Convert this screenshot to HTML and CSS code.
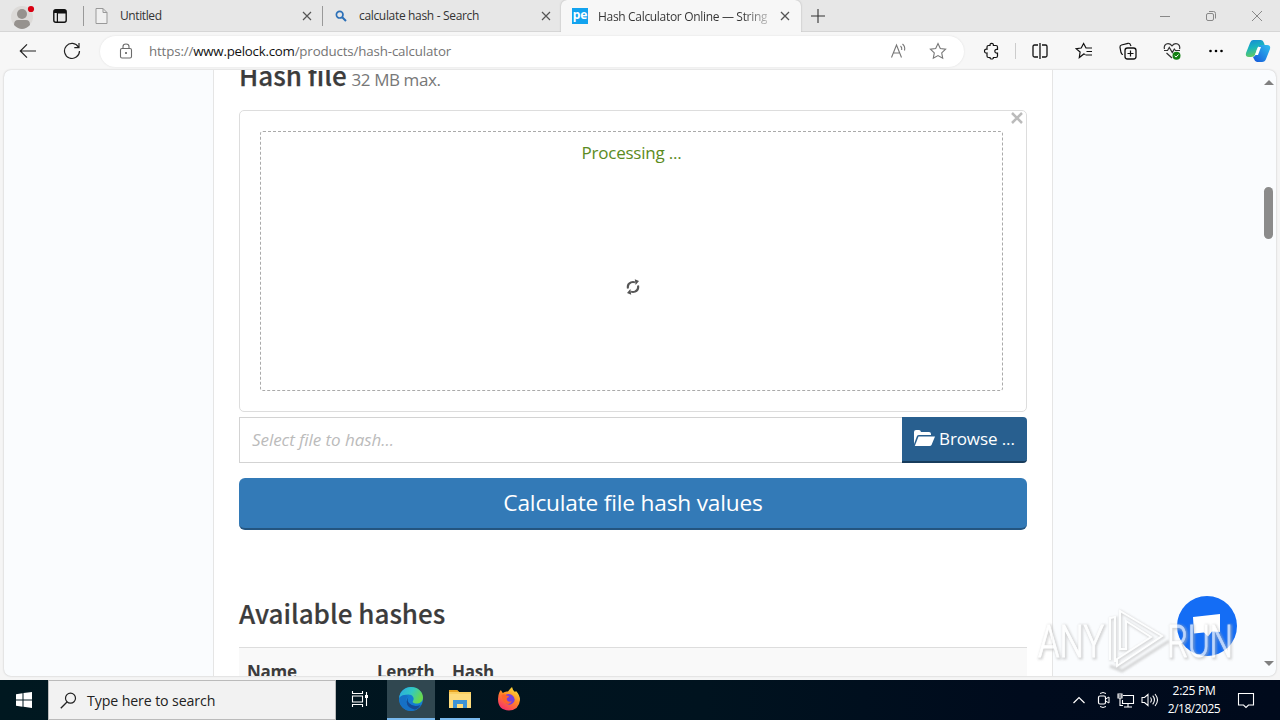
FILE: index.html
```html
<!DOCTYPE html>
<html lang="en">
<head>
<meta charset="utf-8">
<title>Hash Calculator Online</title>
<link rel="stylesheet" href="styles.css">
</head>
<body>
<div class="desktop">
  <header class="tabbar">
    <svg class="avatar" width="26" height="26" viewBox="0 0 26 26"><circle cx="12" cy="14" r="11" fill="#dcdad8"/><circle cx="12" cy="11" r="5" fill="#96928e"/><path d="M4 22q0-5 4-5h8q4 0 4 5-4 4-8 4t-8-4z" fill="#96928e"/><circle cx="21" cy="6" r="3.1" fill="#d90012"/></svg>
    <svg class="workspace" width="16" height="16" viewBox="0 0 16 16"><rect x="1.8" y="1.8" width="12.4" height="12.4" rx="2" fill="none" stroke="#111" stroke-width="1.4"/><path d="M2 2h12v3.5H6V14H4.8V5H2z" fill="#111"/></svg>
    <div class="tab first"><svg width="13" height="16" viewBox="0 0 13 16"><path d="M1 .5h7l4 4v11H1zM8 .5v4h4" fill="#f0f0f0" stroke="#999"/></svg><span class="tabtext t1">Untitled</span><svg class="close" width="10" height="10" viewBox="0 0 10 10"><path d="M1 1l8 8M9 1L1 9" stroke="#555" stroke-width="1.2"/></svg></div>
    <div class="tab second"><svg width="12" height="12" viewBox="0 0 12 12"><circle cx="4.7" cy="4.7" r="3.3" fill="none" stroke="#2c70b8" stroke-width="1.7"/><path d="M7.2 7.2L11 11" stroke="#2c70b8" stroke-width="2"/></svg><span class="tabtext t2">calculate hash - Search</span><svg class="close" width="10" height="10" viewBox="0 0 10 10"><path d="M1 1l8 8M9 1L1 9" stroke="#555" stroke-width="1.2"/></svg></div>
    <div class="tab active"><span class="pe">pe</span><span class="tabtext t3">Hash Calculator Online — String</span><svg class="close" width="10" height="10" viewBox="0 0 10 10"><path d="M1 1l8 8M9 1L1 9" stroke="#555" stroke-width="1.3"/></svg></div>
    <svg class="plus" width="14" height="14" viewBox="0 0 14 14"><path d="M7 0v14M0 7h14" stroke="#333" stroke-width="1.1"/></svg>
    <div class="winctl">
      <svg width="10" height="10" viewBox="0 0 10 10"><path d="M0 5.5h10" stroke="#888"/></svg>
      <svg width="12" height="12" viewBox="0 0 12 12"><rect x="1.5" y="3.5" width="7" height="7" rx="1.5" fill="none" stroke="#888"/><path d="M4 1.5h4.500q2 0 2 2v5" fill="none" stroke="#888"/></svg>
      <svg width="12" height="12" viewBox="0 0 12 12"><path d="M1 1l10 10M11 1L1 11" stroke="#888"/></svg>
    </div>
  </header>

  <div class="toolbar">
    <span class="slot"><svg width="18" height="16" viewBox="0 0 18 16"><path d="M17 8H1.500M8 1.300L1.300 8 8 14.700" fill="none" stroke="#222" stroke-width="1.200"/></svg></span>
    <span class="slot"><svg width="18" height="18" viewBox="0 0 18 18"><path d="M15.500 5.200A7.500 7.500 0 1 0 16.500 9M16 1v4.700h-4.700" fill="none" stroke="#222" stroke-width="1.200"/></svg></span>
    <div class="address">
      <svg width="14" height="16" viewBox="0 0 14 16"><rect x="1.500" y="5.500" width="11" height="9.500" rx="1.500" fill="none" stroke="#6b6b6b" stroke-width="1.100"/><path d="M4 5.500V3.500q0-2.500 3-2.500t3 2.500v2" fill="none" stroke="#6b6b6b" stroke-width="1.100"/><circle cx="7" cy="10" r="1" fill="#555"/></svg>
      <span class="url">https://<b>www.pelock.com</b>/products/hash-calculator</span>
      <svg class="read" width="18" height="18" viewBox="0 0 18 18"><path d="M1.500 15.500L6.500 3l5 12.500M3.300 11h6.400M10.500 4q1.700 1.500 1.200 4M12.500 2q3 2.500 2 6.500" fill="none" stroke="#777" stroke-width="1.100"/></svg>
      <svg width="18" height="18" viewBox="0 0 18 18"><path d="M9 1.500l2.300 5 5.300.700-3.900 3.700 1 5.300L9 13.600l-4.700 2.600 1-5.300L1.400 7.200l5.300-.7z" fill="none" stroke="#777" stroke-width="1.100"/></svg>
    </div>
    <span class="slot puzzle"><svg width="18" height="18" viewBox="0 0 18 18"><path d="M5.500 3.500H7q-.2-2.200 1.700-2.200t1.700 2.200h2.600q1.500 0 1.500 1.500v2.300h-.8a1.900 1.900 0 0 0 0 3.800h.8V14q0 1.500-1.500 1.500h-2.600q.1 1.500-1.700 1.500T7 15.500H5.500Q4 15.500 4 14v-3Q1.500 11.200 1.500 9T4 7.200V5q0-1.500 1.500-1.500z" fill="none" stroke="#111" stroke-width="1.200"/></svg></span>
    <i class="toolsep"></i>
    <span class="slot split"><svg width="18" height="18" viewBox="0 0 18 18"><path d="M7 3H3.500Q2 3 2 4.500v9Q2 15 3.500 15H7M11 3h3.500Q16 3 16 4.500v9q0 1.500-1.500 1.500H11M9 1v16" fill="none" stroke="#111" stroke-width="1.300"/></svg></span>
    <span class="slot"><svg width="18" height="18" viewBox="0 0 18 18"><path d="M10.300 12.500L8.800 12l-4.500 3.500.8-5.500L1.200 6.700l5-.7 2.400-4.500L11 6h6M11.500 9.500H17M10.500 13H17" fill="none" stroke="#111" stroke-width="1.200"/></svg></span>
    <span class="slot"><svg width="18" height="18" viewBox="0 0 18 18"><rect x="6" y="6" width="11" height="11" rx="2.500" fill="none" stroke="#111" stroke-width="1.300"/><path d="M11.500 8.500v6M8.500 11.500h6M4 12.500Q2.500 12.500 2 10.500L1 5.300Q.8 3.500 2.500 3L9 1.300Q11 1 11.500 3L12 4" fill="none" stroke="#111" stroke-width="1.200"/></svg></span>
    <span class="slot"><svg width="18" height="18" viewBox="0 0 18 18"><path d="M1.500 7Q.5 3.500 3.300 2 6.500.8 9 3.800 11.500.8 14.700 2 17.500 3.500 16.500 7M1 8.500h3.500l1.800-3 3 5 2-3.500 1.200 1.500H17M3.500 11L9 16" fill="none" stroke="#333" stroke-width="1.200"/><circle cx="13.500" cy="13.700" r="4" fill="#128012"/><path d="M11.600 13.700l1.400 1.400 2.500-2.600" fill="none" stroke="#fff"/></svg></span>
    <span class="slot"><svg width="16" height="4" viewBox="0 0 16 4"><circle cx="2.500" cy="2" r="1.300"/><circle cx="8" cy="2" r="1.300"/><circle cx="13.500" cy="2" r="1.300"/></svg></span>
    <span class="slot copilot"><svg width="26" height="24" viewBox="0 0 26 24"><defs><linearGradient id="c1" x1="0" y1="0" x2=".3" y2="1"><stop stop-color="#1686d9"/><stop offset=".5" stop-color="#18b4bd"/><stop offset="1" stop-color="#62ca62"/></linearGradient><linearGradient id="c2" x1="1" y1="0" x2="0" y2="1"><stop stop-color="#2dc1ef"/><stop offset="1" stop-color="#1554d9"/></linearGradient></defs><path d="M8 1h8q2 0 3 3l1 3h-5q-2 0-3 3l-2 6q-1 2-4 2H4q-4 0-3-4L5 4q1-3 3-3z" fill="url(#c1)"/><path d="M20 6h2q4 0 3 4l-4 10q-1 3-4 3h-5q-2 0-3-3l-1-2q2 0 3-3l2-6q1-3 3-3z" fill="url(#c2)"/><path d="M13 8h3l-3 8h-3z" fill="#fff"/></svg></span>
  </div>

  <div class="viewport">
    <main class="page">
      <h2 class="filehead">Hash file <small>32 MB max.</small></h2>
      <section class="preview">
        <svg class="dismiss" width="12" height="12" viewBox="0 0 12 12"><path d="M1 1l10 10M11 1L1 11" stroke="#bbb" stroke-width="2.500"/></svg>
        <div class="dropzone">
          <p class="status">Processing ...</p>
          <svg class="spinner" width="14" height="16" viewBox="0 0 14 16"><path d="M2 9.500Q1 5 5 3.400q2-.8 4 0M12 6.500q1 4.500-3 6.100-2 .8-4 0" fill="none" stroke="#555" stroke-width="2.100"/><path d="M8.800.2l.8 5.800 3.400-4zM5.200 15.800L4.400 10 1 14z" fill="#555"/></svg>
        </div>
      </section>
      <div class="filerow">
        <div class="fileinput"><span>Select file to hash...</span></div>
        <div class="browse"><svg width="22" height="18" viewBox="0 0 22 18"><path d="M1 15V3q0-2 2-2h3q1.500 0 2 2h8q2 0 2 2v1H6Q4.500 6 4 7z" fill="#fff"/><path d="M5.500 7.500H22L18.500 16q-.5 1-2 1H1.800z" fill="#fff"/></svg><span>Browse ...</span></div>
      </div>
      <div class="calculate"><span>Calculate file hash values</span></div>
      <h2 class="available"><span>Available hashes</span></h2>
      <div class="hashtable"><span class="c1">Name</span><span class="c2">Length</span><span class="c3">Hash</span></div>
    </main>
    <div class="scrollbar"><svg width="10" height="6" viewBox="0 0 10 6"><path d="M0 6L5 1l5 5z" fill="#808080"/></svg><i class="thumb"></i><svg class="down" width="10" height="6" viewBox="0 0 10 6"><path d="M0 0l5 5 5-5z" fill="#808080"/></svg></div>
  </div>

  <footer class="taskbar">
    <div class="start"><svg width="16" height="16" viewBox="0 0 16 16"><path d="M0 2.200L6.500 1.300v6.200H0zM7.500 1.100L16 0v7.500H7.500zM0 8.500h6.500v6.200L0 13.800zM7.500 8.500H16V16l-8.500-1.200z" fill="#fff"/></svg></div>
    <div class="search"><svg width="17" height="17" viewBox="0 0 17 17"><circle cx="10.500" cy="6.200" r="5" fill="none" stroke="#222" stroke-width="1.200"/><path d="M7 10L.8 16.200" stroke="#222" stroke-width="1.300"/></svg><span>Type here to search</span></div>
    <div class="app view"><svg width="18" height="16" viewBox="0 0 18 16"><path d="M1.500 0v2.500h10V0M1.500 16v-2.500h10V16M1.500 5h10v6h-10zM15.500 1v14" fill="none" stroke="#fff" stroke-width="1.100"/><rect x="14" y="4" width="3" height="3" fill="#fff"/></svg></div>
    <div class="app edge"><svg width="26" height="26" viewBox="0 0 26 26"><defs><linearGradient id="e1" x1="0" y1="0" x2="1" y2=".4"><stop stop-color="#2aa5e4"/><stop offset=".55" stop-color="#32c9c2"/><stop offset="1" stop-color="#68d84e"/></linearGradient></defs><circle cx="13" cy="13" r="12" fill="#147dd2"/><path d="M1.200 12C2 5 7 1 13 1c7 0 12 5 12 10.500 0 4-3 6-6.500 6-3 0-4.500-1.200-3.500-2.500 2-3-.5-6.500-4.500-6.500C6 8.500 2.500 10 1.200 12z" fill="url(#e1)"/><path d="M10 10q-4 4-.5 9 3 4 8 4.500Q13 26 8 23.800 1 20 1.300 12 5 7 10 10z" fill="#1670c5"/><path d="M10.500 11q-2 3 .5 6 4 4.500 11.700 2-2 3.500-5.500 4.700Q9 22 8.500 16q0-3 2-5z" fill="#154a93"/></svg></div>
    <div class="app folder"><svg width="22" height="20" viewBox="0 0 22 20"><path d="M0 1h8l2 2h12v16H0z" fill="#f9cf62"/><path d="M0 1h8l2 2H0z" fill="#e6a323"/><path d="M0 5h22v14H0z" fill="#fddb7c"/><path d="M4 19v-8h14v8h-4v-4H8v4z" fill="#3d93d5"/></svg></div>
    <div class="app firefox"><svg width="24" height="24" viewBox="0 0 24 24"><defs><linearGradient id="f1" x1=".8" y1="0" x2=".2" y2="1"><stop stop-color="#ffe83b"/><stop offset=".45" stop-color="#ff8a24"/><stop offset="1" stop-color="#f82870"/></linearGradient></defs><path d="M2.500 5l1.300-2 2 3Q8 4 11 4.500q2-3 4-4.500.5 3 3 5l1-1q4 4 4 9-1 10-11 10.500Q1 23 1 12q0-4 1.500-7z" fill="url(#f1)"/><path d="M8 8.500q3-2.500 7-.5 4 3 2 7-3 4-7 2-4-2.500-2-8.500z" fill="#7540dc"/><path d="M4.500 8q2.500-1.500 5 .5l2.500.5q0 1.500-2 2-1 2.500 1.500 3.500 2 .5 3.500-.5-2 4-6 2.500Q5 14 4.500 8z" fill="#ff652a"/></svg></div>
    <div class="tray">
      <svg class="caret" width="14" height="8" viewBox="0 0 14 8"><path d="M1.500 7L7 1.500 12.500 7" fill="none" stroke="#fff" stroke-width="1.200"/></svg>
      <svg width="14" height="18" viewBox="0 0 14 18"><rect x="1.500" y="5" width="7" height="8" rx="1.500" fill="none" stroke="#fff" stroke-width="1.200"/><path d="M8.500 8L12 6v6L8.500 10M3 2.500q3-2 6 0M3 15.500q3 2 6 0" fill="none" stroke="#fff"/></svg>
      <svg class="net" width="18" height="16" viewBox="0 0 18 16"><path d="M6 3.500h10.500v8H5.500V8M11 11.500V15M7 15h8M1 2h4v4H1zM3 6v7.500h3M1 4h4" fill="none" stroke="#fff" stroke-width="1.100"/></svg>
      <svg class="vol" width="18" height="16" viewBox="0 0 18 16"><path d="M1 5.500h2.500L7 2.500v11L3.500 10.500H1zM9.500 5.500q1.800 2.500 0 5M11.700 3.700q3.500 4.300 0 8.600M14 2q5 6 0 12" fill="none" stroke="#fff" stroke-width="1.050"/></svg>
      <div class="clock"><span class="time">2:25 PM</span><span class="date">2/18/2025</span></div>
      <svg class="notice" width="18" height="18" viewBox="0 0 18 18"><path d="M1.500 2.500h15v11.500h-5L9 16.500 6.500 14h-5z" fill="none" stroke="#fff" stroke-width="1.100"/></svg>
    </div>
  </footer>

  <div class="chat"><svg width="32" height="26" viewBox="0 0 32 26"><path d="M2 4l27-3v18l-8-.5-4 5-4-4-10 1z" fill="#fff"/></svg></div>
  <svg class="watermark" width="204" height="72" viewBox="0 0 204 72">
    <g class="shade"><text x="3" y="52" textLength="66" lengthAdjust="spacingAndGlyphs">ANY</text><text x="132" y="52" textLength="66" lengthAdjust="spacingAndGlyphs">RUN</text><path d="M75 55V13l5-1v45M85 44V6l42 25-45 30v-7l34-22-25-16v28zM74 60l12 5 47-30"/></g>
    <g class="light"><text x="2" y="51" textLength="66" lengthAdjust="spacingAndGlyphs">ANY</text><text x="131" y="51" textLength="66" lengthAdjust="spacingAndGlyphs">RUN</text><path d="M74 54V12l5-1v45M84 43V5l42 25-45 30v-7l34-22-25-16v28z"/></g>
  </svg>
</div>
</body>
</html>
```

FILE: styles.css
```css
* { box-sizing: border-box; }
body { margin: 0; background: #f5f5f5; font-family: "Open Sans", sans-serif; }
svg { display: block; flex: none; }
.desktop { position: relative; width: 1280px; height: 720px; overflow: hidden; display: flex; flex-direction: column; white-space: nowrap; }

.tabbar { height: 32px; flex: none; display: flex; align-items: center; background: #e7e7e7; border-bottom: 1px solid #d6d6d6; }
.avatar { margin: 0 0 0 10px; }
.workspace { margin: 0 15px 0 16px; }
.tab { display: flex; align-items: center; height: 31px; position: relative; }
.tab::before { content: ""; position: absolute; left: 0; top: 6px; width: 1px; height: 20px; background: #999; }
.first { width: 239px; padding: 0 10px 0 12px; }
.second { width: 239px; padding: 0 10px 0 13px; }
.active { width: 240px; height: 32px; padding: 0 11px; background: #f7f7f7; border-radius: 6px 6px 0 0; box-shadow: 0 0 2px #aaa; clip-path: inset(0 -3px); align-self: flex-start; }
.active::before { display: none; }
.close { margin-left: auto; }
.tabtext { color: #333; font: 12px "Open Sans", sans-serif; }
.t1 { margin-left: 12px; letter-spacing: -.4px; }
.t2 { margin-left: 12px; letter-spacing: -.33px; }
.t3 { margin-left: 10px; letter-spacing: -.32px; background: linear-gradient(90deg, #333 86%, #bbb); -webkit-background-clip: text; color: transparent; }
.pe { width: 16px; height: 16px; background: #12a3ef; color: #fff; font: bold 12px/13px "Open Sans", sans-serif; text-align: center; }
.plus { margin-left: 10px; }
.winctl { margin-left: auto; width: 103px; margin-right: 17px; display: flex; align-items: center; justify-content: space-between; }

.toolbar { height: 38px; flex: none; display: flex; align-items: center; padding-left: 6px; background: #f7f7f7; }
.slot { width: 44px; display: flex; justify-content: center; flex: none; }
.address { width: 864px; height: 31px; margin-left: 6px; padding: 0 17px 0 19px; flex: none; display: flex; align-items: center; background: #fff; border-radius: 16px; box-shadow: 0 0 2px #ddd; }
.url { margin-left: 16px; font-size: 13.3px; letter-spacing: -.14px; color: #757575; }
.url b { font-weight: 400; color: #111; letter-spacing: -.25px; }
.read { margin: 0 21px 0 auto; }
.puzzle { margin-left: 6px; }
.toolsep { width: 1px; height: 16px; background: #ccc; margin-left: 1px; }
.split { margin-left: 2px; }
.copilot { width: 40px; }

.viewport { width: 1272px; height: 606px; margin: 0 4px 4px; flex: none; overflow: hidden; border-radius: 7px; display: flex; position: relative; background: #fafcfe; box-shadow: 0 0 2px #bbb; }
.page { width: 840px; height: 606px; margin-left: 209px; padding: 0 25px; overflow: hidden; background: #fff; border: solid #e5e5e5; border-width: 0 1px; }
.filehead { margin: -14px 0 0; height: 54px; font: 500 26px/38px "Noto Sans CJK SC", sans-serif; color: #3c3c3c; -webkit-text-stroke: .25px #3c3c3c; }
.filehead small { font: 400 17px "Open Sans", sans-serif; color: #777; letter-spacing: -.4px; -webkit-text-stroke: 0; margin-left: -1px; }
.preview { width: 788px; height: 302px; border: 1px solid #ddd; border-radius: 5px; padding: 20px; position: relative; }
.dismiss { position: absolute; right: 3px; top: 1px; }
.dropzone { width: 743px; height: 260px; border: 1px dashed #aaa; border-radius: 3px; display: flex; flex-direction: column; align-items: center; }
.status { margin: 9px 0 0; font-size: 17px; line-height: 24px; color: #5b8b22; letter-spacing: -.22px; }
.spinner { margin: 114px 0 0 2px; }
.filerow { width: 788px; height: 46px; margin-top: 5px; display: flex; }
.fileinput { flex: 1; border: 1px solid #d3d3d3; border-right: 0; display: flex; align-items: center; padding: 0 0 2px 12px; font-size: 17px; font-style: italic; color: #bbb; letter-spacing: -.06px; }
.browse { width: 125px; background: #285f8f; border-bottom: 2px solid #173c5c; border-radius: 0 4px 4px 0; color: #fff; font-size: 17px; display: flex; align-items: center; gap: 4px; padding: 0 0 2px 11px; letter-spacing: -.1px; }
.calculate { width: 788px; height: 52px; margin-top: 15px; background: #337ab7; border-bottom: 2px solid #245580; border-radius: 6px; color: #fff; font-size: 22.700px; line-height: 50px; text-align: center; letter-spacing: -.2px; }
.available { margin: 65px 0 0; height: 52px; font: 500 26px/35px "Noto Sans CJK SC", sans-serif; color: #3c3c3c; -webkit-text-stroke: .2px #3c3c3c; }
.hashtable { width: 788px; height: 50px; border-top: 1px solid #ddd; background: #f9f9f9; display: flex; padding-left: 8px; font: 700 17px/48px "Open Sans", sans-serif; color: #3c3c3c; letter-spacing: -.25px; }
.c1 { width: 130px; }
.c2 { width: 75px; }
.scrollbar { margin-left: auto; width: 15px; display: flex; flex-direction: column; align-items: center; padding: 9px 0; }
.thumb { width: 9px; height: 52px; margin-top: 102px; background: #8b8b8b; border-radius: 5px; }
.down { margin-top: auto; }

.taskbar { height: 40px; flex: none; display: flex; background: linear-gradient(90deg, #001820, #00131f 55%, #000b1d 80%, #000a1c); color: #fff; }
.start { width: 48px; display: flex; align-items: center; justify-content: center; }
.search { width: 288px; background: #f2f2f2; border: 1px solid #bbb; display: flex; align-items: center; padding-left: 11px; gap: 10px; color: #222; font-size: 14.200px; letter-spacing: -.12px; }
.app { width: 49px; display: flex; align-items: center; justify-content: center; border-bottom: 2px solid transparent; }
.view { width: 51px; padding-right: 3px; }
.edge { width: 48px; background: #304750; border-color: #78b9ee; }
.folder { width: 40px; margin: 0 5px; border-color: #78b9ee; }
.firefox { width: 48px; }
.tray { margin-left: auto; width: 208px; display: flex; align-items: center; }
.caret { margin-right: 11px; }
.net { margin-left: 6px; }
.vol { margin-left: 6px; }
.clock { width: 66px; margin-left: 2px; margin-right: 10px; display: flex; flex-direction: column; align-items: center; font-size: 12px; line-height: 18px; }
.time { letter-spacing: -.3px; }
.date { letter-spacing: -.5px; }

.chat { position: absolute; left: 1177px; top: 596px; width: 60px; height: 60px; border-radius: 50%; background: #146df5; display: flex; align-items: center; justify-content: center; }
.watermark { position: absolute; left: 1036px; top: 606px; font: 300 44px Roboto, sans-serif; opacity: .72; }
.shade { fill: none; stroke: #b5b5b5; stroke-width: 3px; opacity: .75; filter: blur(1px); }
.light { fill: #fff; stroke: #fff; stroke-width: .8px; }
.light path { fill: none; stroke-width: 2px; }
```
